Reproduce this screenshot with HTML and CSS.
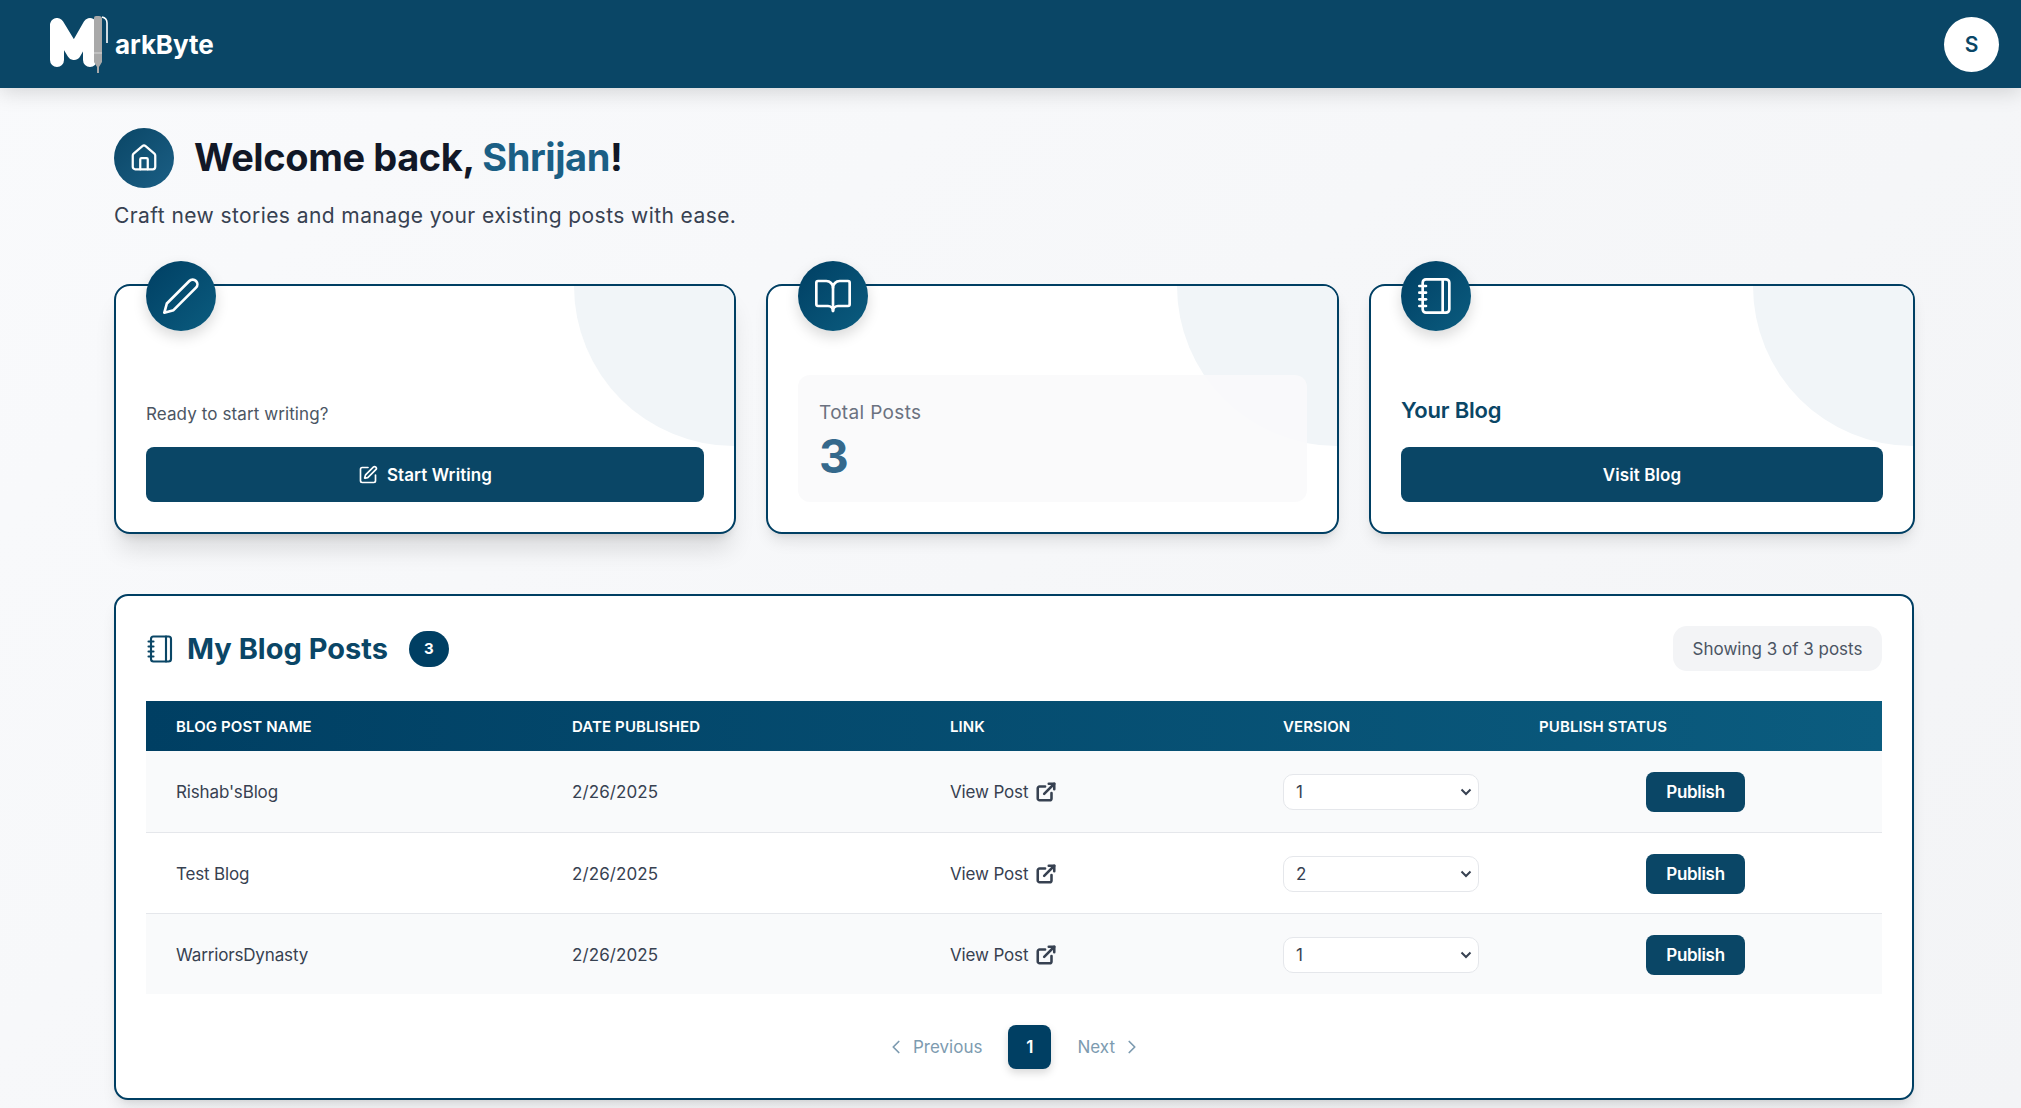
FILE: index.html
```html
<!DOCTYPE html>
<html lang="en">
<head>
    <meta charset="UTF-8">
    <meta name="viewport" content="width=device-width, initial-scale=1.0">
    <title>MarkByte - Dashboard</title>
    <link rel="stylesheet" href="styles.css">
</head>
<body>
    <header class="topbar">
        <div class="brand">
            <svg class="brand-logo" width="62" height="60" viewBox="0 0 62 60" aria-hidden="true">
                <path d="M9 10 V45 M9 10 L26 38 L42 10 V45" fill="none" stroke="#fff" stroke-width="14" stroke-linecap="round" stroke-linejoin="round"/>
                <path d="M48 1 h3 a3 3 0 0 1 3 3 V47 L51 52 V58 H49 V52 L46 47 V3 a2 2 0 0 1 2 -2z" fill="#a9a9a9"/>
                <path d="M46 38 H54" stroke="#d8d8d8" stroke-width="1"/>
                <path d="M54 2 q5 1 5 6 V28" fill="none" stroke="#fff" stroke-width="1.6"/>
            </svg>
            <span class="brand-name">arkByte</span>
        </div>
        <div class="avatar">S</div>
    </header>

    <main class="page">
        <div class="welcome">
            <div class="welcome-icon">
                <svg width="30" height="30" viewBox="0 0 24 24" class="icon" stroke-width="1.8"><path d="M15 21v-8a1 1 0 0 0-1-1h-4a1 1 0 0 0-1 1v8"/><path d="M3 10a2 2 0 0 1 .709-1.528l7-5.999a2 2 0 0 1 2.582 0l7 5.999A2 2 0 0 1 21 10v9a2 2 0 0 1-2 2H5a2 2 0 0 1-2-2z"/></svg>
            </div>
            <h1>Welcome back, <span class="accent">Shrijan</span>!</h1>
        </div>
        <p class="subtitle">Craft new stories and manage your existing posts with ease.</p>

        <section class="cards">
            <div class="card card-raised">
                <div class="card-icon">
                    <svg width="40" height="40" viewBox="0 0 24 24" class="icon" stroke-width="1.6"><path d="M17 3a2.828 2.828 0 1 1 4 4L7.5 20.5 2 22l1.5-5.5L17 3z"/></svg>
                </div>
                <div class="card-body">
                    <p class="card-note">Ready to start writing?</p>
                    <a class="btn-wide" href="#">
                        <svg width="20" height="20" viewBox="0 0 24 24" class="icon" stroke-width="2"><path d="M12 3H5a2 2 0 0 0-2 2v14a2 2 0 0 0 2 2h14a2 2 0 0 0 2-2v-7"/><path d="M18.375 2.625a1 1 0 0 1 3 3l-9.013 9.014a2 2 0 0 1-.853.505l-2.873.84a.5.5 0 0 1-.62-.62l.84-2.873a2 2 0 0 1 .506-.852z"/></svg>
                        Start Writing
                    </a>
                </div>
            </div>

            <div class="card">
                <div class="card-icon">
                    <svg width="40" height="40" viewBox="0 0 24 24" class="icon" stroke-width="1.6"><path d="M12 7v14"/><path d="M3 18a1 1 0 0 1-1-1V4a1 1 0 0 1 1-1h5a4 4 0 0 1 4 4 4 4 0 0 1 4-4h5a1 1 0 0 1 1 1v13a1 1 0 0 1-1 1h-6a3 3 0 0 0-3 3 3 3 0 0 0-3-3z"/></svg>
                </div>
                <div class="card-body">
                    <div class="stat-box">
                        <div class="stat-label">Total Posts</div>
                        <div class="stat-value">3</div>
                    </div>
                </div>
            </div>

            <div class="card">
                <div class="card-icon">
                    <svg width="40" height="40" viewBox="0 0 24 24" class="icon" stroke-width="1.6"><path d="M2 6h4"/><path d="M2 10h4"/><path d="M2 14h4"/><path d="M2 18h4"/><rect width="16" height="20" x="4" y="2" rx="2"/><path d="M16 2v20"/></svg>
                </div>
                <div class="card-body">
                    <h3 class="card-title">Your Blog</h3>
                    <a class="btn-wide" href="#">Visit Blog</a>
                </div>
            </div>
        </section>

        <section class="panel">
            <div class="panel-head">
                <div class="panel-title">
                    <svg width="30" height="30" viewBox="0 0 24 24" class="icon icon-dark" stroke-width="1.7"><path d="M2 6h4"/><path d="M2 10h4"/><path d="M2 14h4"/><path d="M2 18h4"/><rect width="16" height="20" x="4" y="2" rx="2"/><path d="M16 2v20"/></svg>
                    <h2>My Blog Posts</h2>
                    <span class="count">3</span>
                </div>
                <div class="showing">Showing 3 of 3 posts</div>
            </div>

            <table class="posts">
                <thead>
                    <tr>
                        <th class="col-name">Blog Post Name</th>
                        <th class="col-date">Date Published</th>
                        <th class="col-link">Link</th>
                        <th class="col-version">Version</th>
                        <th>Publish Status</th>
                    </tr>
                </thead>
                <tbody>
                    <tr>
                        <td>Rishab'sBlog</td>
                        <td class="cell-date">2/26/2025</td>
                        <td><a class="view-link" href="#">View Post <svg width="22" height="22" viewBox="0 0 24 24" class="icon icon-link" stroke-width="2.8"><path d="M18 13v6a2 2 0 0 1-2 2H5a2 2 0 0 1-2-2V8a2 2 0 0 1 2-2h6"/><path d="M15 3h6v6"/><path d="M10 14 21 3"/></svg></a></td>
                        <td><select class="version"><option>1</option><option>2</option></select></td>
                        <td class="cell-center"><button class="btn-publish">Publish</button></td>
                    </tr>
                    <tr>
                        <td>Test Blog</td>
                        <td class="cell-date">2/26/2025</td>
                        <td><a class="view-link" href="#">View Post <svg width="22" height="22" viewBox="0 0 24 24" class="icon icon-link" stroke-width="2.8"><path d="M18 13v6a2 2 0 0 1-2 2H5a2 2 0 0 1-2-2V8a2 2 0 0 1 2-2h6"/><path d="M15 3h6v6"/><path d="M10 14 21 3"/></svg></a></td>
                        <td><select class="version"><option>2</option><option>1</option></select></td>
                        <td class="cell-center"><button class="btn-publish">Publish</button></td>
                    </tr>
                    <tr>
                        <td>WarriorsDynasty</td>
                        <td class="cell-date">2/26/2025</td>
                        <td><a class="view-link" href="#">View Post <svg width="22" height="22" viewBox="0 0 24 24" class="icon icon-link" stroke-width="2.8"><path d="M18 13v6a2 2 0 0 1-2 2H5a2 2 0 0 1-2-2V8a2 2 0 0 1 2-2h6"/><path d="M15 3h6v6"/><path d="M10 14 21 3"/></svg></a></td>
                        <td><select class="version"><option>1</option><option>2</option></select></td>
                        <td class="cell-center"><button class="btn-publish">Publish</button></td>
                    </tr>
                </tbody>
            </table>

            <nav class="pager">
                <a class="pager-link" href="#"><svg width="22" height="22" viewBox="0 0 24 24" class="icon icon-pager" stroke-width="1.9"><path d="m15 18-6-6 6-6"/></svg>Previous</a>
                <span class="pager-current">1</span>
                <a class="pager-link" href="#">Next<svg width="22" height="22" viewBox="0 0 24 24" class="icon icon-pager" stroke-width="1.9"><path d="m9 18 6-6-6-6"/></svg></a>
            </nav>
        </section>
    </main>
</body>
</html>
```

FILE: styles.css
```css
/* Base */
* {
  box-sizing: border-box;
}

body {
  margin: 0;
  background: linear-gradient(135deg, #f9fafc, #f3f4f6);
  color: #374151;
  font-family: Inter, "Open Sans", Arial, sans-serif;
}

a {
  text-decoration: none;
}

.icon {
  fill: none;
  stroke: #ffffff;
  stroke-linecap: round;
  stroke-linejoin: round;
  flex-shrink: 0;
}

.icon-dark {
  stroke: #0a4666;
}

.icon-link {
  stroke: #374151;
}

.icon-pager {
  stroke: #7d9bb0;
}

/* Top bar */
.topbar {
  height: 88px;
  padding: 0 22px 0 48px;
  display: flex;
  align-items: center;
  justify-content: space-between;
  background-color: #0a4666;
  box-shadow: 0 4px 20px rgba(0, 0, 0, 0.15);
}

.brand {
  display: flex;
  align-items: center;
}

.brand-logo {
  margin-top: 2px;
}

.brand-name {
  margin-left: 5px;
  color: #ffffff;
  font-size: 26px;
  font-weight: 700;
  letter-spacing: -0.1px;
}

.avatar {
  width: 55px;
  height: 55px;
  border-radius: 50%;
  background-color: #ffffff;
  color: #0a4666;
  display: flex;
  align-items: center;
  justify-content: center;
  font-size: 21px;
  font-weight: 600;
}

/* Page */
.page {
  padding: 40px 106px 8px 114px;
}

.welcome {
  display: flex;
  align-items: center;
  gap: 20px;
}

.welcome-icon {
  width: 60px;
  height: 60px;
  border-radius: 50%;
  background: linear-gradient(135deg, #0a4666, #1b5f85);
  display: flex;
  align-items: center;
  justify-content: center;
}

.welcome h1 {
  margin: 0 0 2px;
  color: #111827;
  font-size: 38px;
  font-weight: 700;
  letter-spacing: -0.4px;
}

.accent {
  color: #1b5f85;
}

.subtitle {
  margin: 15px 0 0;
  font-size: 21px;
  line-height: 26px;
  letter-spacing: 0.42px;
}

/* Cards */
.cards {
  margin-top: 55px;
  display: grid;
  grid-template-columns: 622px 573px 1fr;
  gap: 30px;
}

.card {
  position: relative;
  height: 250px;
  padding: 0 30px 30px;
  background-color: #ffffff;
  border: 2px solid #003f63;
  border-radius: 16px;
  box-shadow: 0 10px 15px -3px rgba(0, 0, 0, 0.1), 0 4px 6px -4px rgba(0, 0, 0, 0.1);
  display: flex;
  flex-direction: column;
  justify-content: flex-end;
}

.card-raised {
  box-shadow: 0 20px 25px -5px rgba(0, 0, 0, 0.12), 0 8px 10px -6px rgba(0, 0, 0, 0.12);
}

.card::before {
  content: "";
  position: absolute;
  top: 0;
  right: 0;
  width: 160px;
  height: 160px;
  background-color: #f1f5f8;
  border-radius: 0 14px 0 100%;
}

.card-icon {
  position: absolute;
  top: -25px;
  left: 30px;
  width: 70px;
  height: 70px;
  border-radius: 50%;
  background: linear-gradient(135deg, #003f63, #0b5c7f);
  box-shadow: 0 6px 14px rgba(0, 0, 0, 0.15);
  display: flex;
  align-items: center;
  justify-content: center;
}

.card-body {
  position: relative;
}

.card-note {
  margin: 0 0 21px;
  color: #4b5563;
  font-size: 17px;
  line-height: 24px;
  letter-spacing: 0.1px;
}

.card-title {
  margin: 0 0 22px;
  color: #0a4666;
  font-size: 22px;
  line-height: 30px;
  font-weight: 600;
  letter-spacing: -0.2px;
}

.btn-wide {
  height: 55px;
  border-radius: 8px;
  background-color: #0a4666;
  color: #ffffff;
  display: flex;
  align-items: center;
  justify-content: center;
  gap: 9px;
  font-size: 17px;
  font-weight: 600;
  letter-spacing: 0.1px;
}

.stat-box {
  height: 127px;
  padding: 25px 21px 0;
  background-color: rgba(249, 250, 251, 0.9);
  border-radius: 12px;
}

.stat-label {
  color: #6b7280;
  font-size: 19px;
  line-height: 26px;
  letter-spacing: 0.35px;
}

.stat-value {
  margin-top: 4px;
  color: #35698c;
  font-size: 46px;
  line-height: 52px;
  font-weight: 700;
}

/* Posts panel */
.panel {
  margin-top: 60px;
  margin-right: 1px;
  height: 506px;
  padding: 30px;
  background-color: #ffffff;
  border: 2px solid #003f63;
  border-radius: 14px;
  box-shadow: 0 10px 15px -3px rgba(0, 0, 0, 0.1), 0 4px 6px -4px rgba(0, 0, 0, 0.1);
}

.panel-head {
  height: 45px;
  display: flex;
  align-items: center;
  justify-content: space-between;
}

.panel-title {
  display: flex;
  align-items: center;
}

.panel-title h2 {
  margin: 0 21px 0 11px;
  color: #0a4666;
  font-size: 29px;
  font-weight: 700;
}

.count {
  width: 40px;
  height: 36px;
  border-radius: 18px;
  background-color: #003f63;
  color: #ffffff;
  display: flex;
  align-items: center;
  justify-content: center;
  font-size: 15px;
  font-weight: 700;
}

.showing {
  width: 209px;
  height: 45px;
  border-radius: 14px;
  background-color: #f3f4f6;
  color: #4b5563;
  display: flex;
  align-items: center;
  justify-content: center;
  font-size: 17px;
}

/* Table */
.posts {
  width: 100%;
  margin-top: 30px;
  border-collapse: collapse;
  table-layout: fixed;
}

.posts thead tr {
  height: 50px;
  background: linear-gradient(90deg, #003f63, #0b5c7f);
}

.posts th {
  padding: 0 30px;
  color: #ffffff;
  font-size: 15px;
  font-weight: 600;
  text-align: left;
  text-transform: uppercase;
  letter-spacing: 0.1px;
}

.col-name {
  width: 396px;
}

.col-date {
  width: 378px;
}

.col-link {
  width: 333px;
}

.col-version {
  width: 256px;
}

.posts td {
  height: 81px;
  padding: 2px 30px 0;
  font-size: 17px;
  border-bottom: 1px solid #e5e7eb;
  letter-spacing: -0.15px;
}

.posts tbody tr:nth-child(odd) {
  background-color: #f9fafb;
}

.posts tbody tr:last-child td {
  border-bottom: none;
}

.posts .cell-date {
  letter-spacing: 0.1px;
}

.cell-center {
  text-align: center;
}

.view-link {
  color: #374151;
  display: inline-flex;
  align-items: center;
  gap: 7px;
}

.version {
  appearance: none;
  width: 196px;
  height: 36px;
  padding: 0 30px 0 12px;
  background: #ffffff url("data:image/svg+xml,%3Csvg xmlns='http://www.w3.org/2000/svg' width='12' height='8' viewBox='0 0 12 8'%3E%3Cpath d='M1.5 1.5 6 6l4.5-4.5' fill='none' stroke='%23374151' stroke-width='2'/%3E%3C/svg%3E") no-repeat right 6px center;
  border: 1px solid #e5e7eb;
  border-radius: 10px;
  color: #374151;
  font-family: inherit;
  font-size: 17px;
}

.btn-publish {
  width: 99px;
  height: 40px;
  border: none;
  border-radius: 8px;
  background-color: #0a4666;
  color: #ffffff;
  font-family: inherit;
  font-size: 17px;
  font-weight: 600;
  letter-spacing: -0.3px;
}

/* Pagination */
.pager {
  margin-top: 31px;
  display: flex;
  align-items: center;
  justify-content: center;
  gap: 26px;
}

.pager-link {
  color: #7d9bb0;
  display: flex;
  align-items: center;
  gap: 6px;
  font-size: 17px;
}

.pager-current {
  width: 43px;
  height: 44px;
  border-radius: 8px;
  background-color: #003f63;
  box-shadow: 0 4px 8px rgba(0, 0, 0, 0.15);
  color: #ffffff;
  display: flex;
  align-items: center;
  justify-content: center;
  font-size: 17px;
  font-weight: 600;
}
```
